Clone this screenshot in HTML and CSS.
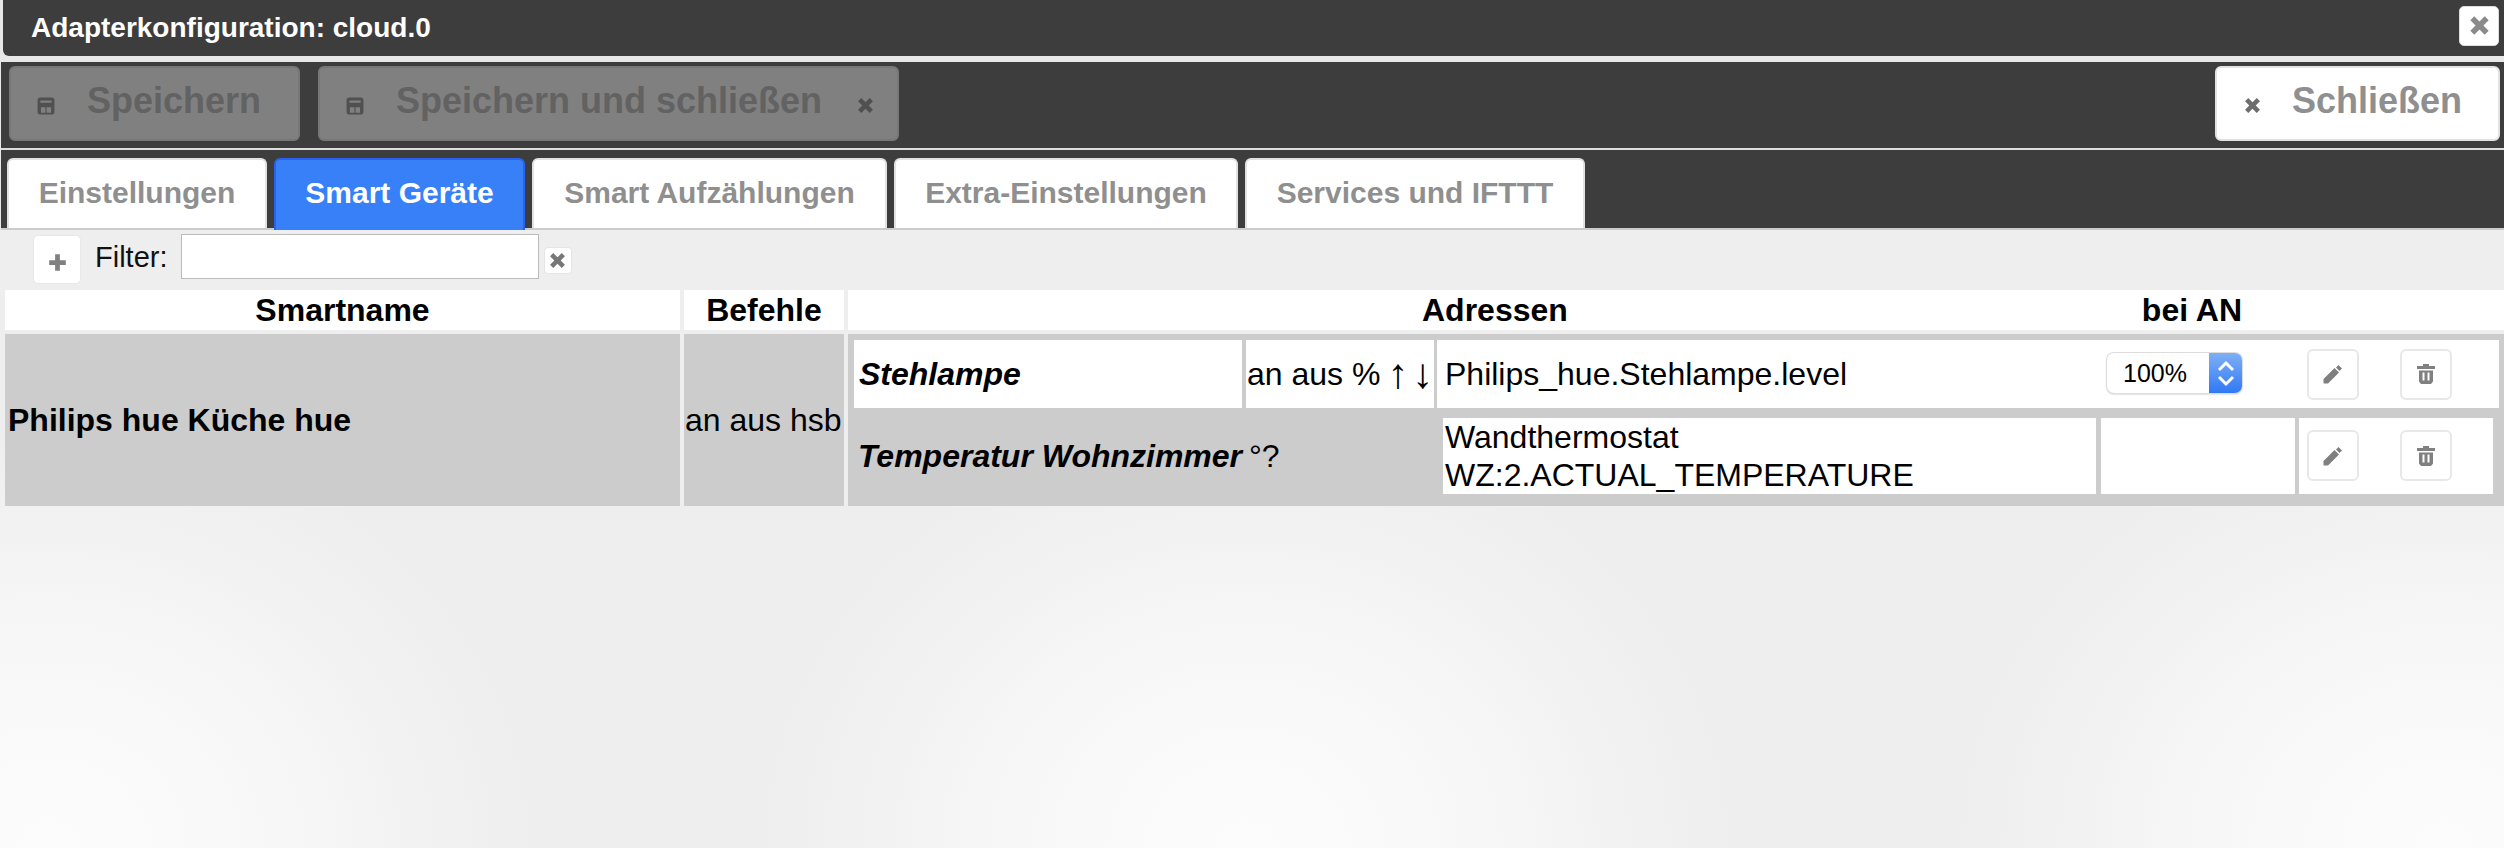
FILE: index.html
```html
<!DOCTYPE html>
<html>
<head>
    <title>Adapterkonfiguration: cloud.0</title>
    <link rel="stylesheet" href="styles.css">
</head>
<body>
    <svg class="icon-defs" width="0" height="0">
        <symbol id="i-close" viewBox="0 0 16 16"><path d="M1 4 4 1 8 5 12 1 15 4 11 8 15 12 12 15 8 11 4 15 1 12 5 8z"/></symbol>
        <symbol id="i-disk" viewBox="0 0 16 16"><path fill-rule="evenodd" d="M3 0.500h10a2.500 2.500 0 0 1 2.500 2.500v10a2.500 2.500 0 0 1-2.500 2.500H3A2.500 2.500 0 0 1 0.500 13V3A2.500 2.500 0 0 1 3 0.500zM3 3v2h10V3zM3.500 9v5h4V9zm5 0v5h4V9z"/></symbol>
        <symbol id="i-plus" viewBox="0 0 16 16"><path d="M6 1h4v5h5v4h-5v5H6v-5H1V6h5z"/></symbol>
        <symbol id="i-pencil" viewBox="0 0 20 20"><path d="M0.500 15 11.500 4 16 8.500 5 19.500H0.500zM15.500 1 19 4.500 16.500 7 13 3.500z"/></symbol>
        <symbol id="i-trash" viewBox="0 0 20 20"><path fill-rule="evenodd" d="M7 0h6v2h6v3H1V2h6zM3 6.500h14v11l-2 2.500H5l-2-2.500zM6.500 8.500v8h2v-8zM11.500 8.500v8h2v-8z"/></symbol>
    </svg>

    <div class="title-bar">
        <span class="title-text">Adapterkonfiguration: cloud.0</span>
        <button class="title-close"><svg class="icon"><use href="#i-close"/></svg></button>
    </div>

    <div class="action-bar">
        <button class="action-btn disabled btn-save"><svg class="icon"><use href="#i-disk"/></svg><span>Speichern</span></button>
        <button class="action-btn disabled btn-save-close"><svg class="icon"><use href="#i-disk"/></svg><span>Speichern und schließen</span><svg class="icon icon-end"><use href="#i-close"/></svg></button>
        <button class="action-btn btn-close"><svg class="icon"><use href="#i-close"/></svg><span>Schließen</span></button>
    </div>

    <div class="tab-bar">
        <div class="tab tab-1">Einstellungen</div>
        <div class="tab tab-2 active">Smart Geräte</div>
        <div class="tab tab-3">Smart Aufzählungen</div>
        <div class="tab tab-4">Extra-Einstellungen</div>
        <div class="tab tab-5">Services und IFTTT</div>
    </div>

    <div class="content">
        <div class="filter-row">
            <button class="add-btn"><svg class="icon"><use href="#i-plus"/></svg></button>
            <label class="filter-label">Filter:</label>
            <input class="filter-input" type="text">
            <button class="clear-btn"><svg class="icon"><use href="#i-close"/></svg></button>
        </div>

        <div class="head-row">
            <div class="head-cell col-name">Smartname</div>
            <div class="head-cell col-cmd">Befehle</div>
            <div class="head-cell col-addr">
                <span class="head-addr">Adressen</span>
                <span class="head-on">bei AN</span>
            </div>
        </div>

        <div class="device-row">
            <div class="device-cell col-name device-name">Philips hue Küche hue</div>
            <div class="device-cell col-cmd device-cmd">an aus hsb</div>
            <div class="col-addr device-addr">
                <div class="addr-row addr-first">
                    <div class="addr-name">Stehlampe</div>
                    <div class="addr-cmd">an aus % <span class="arrows">↑ ↓</span></div>
                    <div class="addr-main">
                        <span class="addr-path">Philips_hue.Stehlampe.level</span>
                        <div class="select-box">
                            <span class="select-value">100%</span>
                            <span class="select-arrows">
                                <svg viewBox="0 0 33 40" width="33" height="40"><path d="M10 17l7-7 7 7M10 24l7 7 7-7" fill="none" stroke="#fff" stroke-width="3"/></svg>
                            </span>
                        </div>
                        <button class="row-btn"><svg class="icon"><use href="#i-pencil"/></svg></button>
                        <button class="row-btn"><svg class="icon"><use href="#i-trash"/></svg></button>
                    </div>
                </div>
                <div class="addr-row addr-second">
                    <div class="addr-name2">Temperatur Wohnzimmer</div>
                    <div class="addr-cmd2">°?</div>
                    <div class="addr-path2">Wandthermostat<br>WZ:2.ACTUAL_TEMPERATURE</div>
                    <div class="addr-empty"></div>
                    <div class="addr-btns">
                        <button class="row-btn"><svg class="icon"><use href="#i-pencil"/></svg></button>
                        <button class="row-btn"><svg class="icon"><use href="#i-trash"/></svg></button>
                    </div>
                </div>
            </div>
        </div>
    </div>
</body>
</html>
```

FILE: styles.css
```css
* { box-sizing: border-box; }
html, body { margin: 0; padding: 0; height: 100%; overflow: hidden; }
body {
    font-family: "Liberation Sans", Arial, sans-serif;
    background: #e8e8e8;
    width: 2504px;
    height: 848px;
}
button { font-family: inherit; padding: 0; cursor: pointer; }
.icon-defs { position: absolute; }
.icon { width: 18px; height: 18px; fill: #8a8a8a; display: block; flex: none; filter: blur(0.5px); }

.title-bar {
    height: 56px;
    margin-left: 3px;
    background: #3d3d3d;
    border-bottom-left-radius: 6px;
    display: flex;
    align-items: center;
    justify-content: space-between;
    padding: 0 5px 0 28px;
}
.title-text { color: #fff; font-size: 28px; font-weight: bold; }
.title-close {
    width: 40px;
    height: 40px;
    background: #fff;
    border: 1px solid #ddd;
    border-radius: 5px;
    display: flex;
    align-items: center;
    justify-content: center;
    margin-bottom: 5px;
}
.title-close .icon { width: 21px; height: 21px; }

.action-bar {
    margin: 6px 0 0 1px;
    height: 88px;
    background: #3d3d3d;
    border-bottom: 2px solid #ddd;
    display: flex;
    align-items: flex-start;
    padding: 4px 4px 0 8px;
}
.action-btn {
    height: 75px;
    display: flex;
    align-items: center;
    padding-bottom: 6px;
    font-size: 36px;
    font-weight: bold;
    color: #8f8f8f;
    background: #fff;
    border: 2px solid #e2e2e2;
    border-radius: 6px;
}
.action-btn .icon { margin: 10px 32px 0 26px; }
.action-btn.disabled { background: #808080; border-color: #777; color: #626262; }
.action-btn.disabled .icon { fill: #505050; }
.btn-save { width: 291px; }
.btn-save-close { width: 581px; margin-left: 18px; }
.btn-save-close .icon-end { width: 17px; height: 17px; margin: 10px 0 0 35px; }
.btn-close { width: 285px; margin-left: auto; }
.btn-close .icon { width: 17px; height: 17px; fill: #6e6e6e; margin-left: 27px; margin-right: 31px; }

.tab-bar {
    margin-left: 1px;
    height: 80px;
    background: #3d3d3d;
    border-bottom: 2px solid #ccc;
    display: flex;
    align-items: flex-end;
    padding-left: 6px;
    gap: 7px;
}
.tab {
    height: 70px;
    background: #fff;
    border: 2px solid #e2e2e2;
    border-bottom: none;
    border-radius: 6px 6px 0 0;
    color: #8f8f8f;
    font-size: 30px;
    font-weight: bold;
    display: flex;
    align-items: center;
    justify-content: center;
    padding-bottom: 2px;
}
.tab.active { background: #3780f7; border-color: #2a62f0; color: #fff; height: 72px; margin-bottom: -2px; padding-bottom: 4px; position: relative; }
.tab-1 { width: 260px; }
.tab-2 { width: 251px; }
.tab-3 { width: 355px; }
.tab-4 { width: 344px; }
.tab-5 { width: 340px; }

.content {
    height: 618px;
    background-color: #eee;
    background-image: radial-gradient(ellipse 490px 430px at 50% 100%, #fcfcfc 0%, #f9f9f9 35%, #f6f6f6 55%, #f2f2f2 75%, #eee 100%);
    background-size: 1198px 100%;
    background-position: -551px 0;
}
.filter-row { height: 60px; display: flex; align-items: flex-start; padding-left: 33px; }
.add-btn {
    width: 48px;
    height: 49px;
    margin-top: 5px;
    background: #fff;
    border: 1px solid #e8e8e8;
    border-radius: 5px;
    display: flex;
    align-items: center;
    justify-content: center;
}
.add-btn .icon { width: 19px; height: 19px; margin-top: 5px; fill: #808080; }
.filter-label { font-size: 29px; margin-left: 14px; line-height: 44px; margin-top: 5px; color: #111; }
.filter-input {
    width: 358px;
    height: 45px;
    margin: 4px 0 0 13px;
    padding: 0;
    background: #fff;
    border: 1px solid #bbb;
}
.clear-btn {
    width: 28px;
    height: 27px;
    margin: 17px 0 0 5px;
    background: #fff;
    border: 1px solid #e4e4e4;
    border-radius: 4px;
    display: flex;
    align-items: center;
    justify-content: center;
}
.clear-btn .icon { width: 17px; height: 17px; fill: #777; }

.head-row, .device-row { display: flex; padding-left: 5px; gap: 4px; font-size: 32px; }
.head-cell {
    height: 40px;
    line-height: 40px;
    background: #fff;
    font-weight: bold;
    text-align: center;
    color: #000;
}
.col-name { width: 675px; }
.col-cmd { width: 160px; }
.col-addr { flex: 1; }
.head-cell.col-addr { display: flex; }
.head-addr { margin-left: 574px; }
.head-on { margin-left: 574px; }

.device-row { margin-top: 4px; height: 172px; }
.device-cell { background: #ccc; display: flex; align-items: center; color: #000; }
.device-name { font-weight: bold; padding-left: 3px; }
.device-cmd { padding-left: 1px; }
.device-addr { background: #ccc; padding: 6px 5px 0 6px; color: #000; }

.addr-row { display: flex; }
.addr-first { height: 68px; gap: 4px; }
.addr-name, .addr-cmd, .addr-main { background: #fff; display: flex; align-items: center; }
.addr-name { width: 388px; font-weight: bold; font-style: italic; padding-left: 5px; }
.addr-cmd { width: 188px; padding-left: 1px; white-space: pre; }
.arrows { font-size: 42px; line-height: 1; word-spacing: -8px; margin-left: -2px; }
.addr-main { flex: 1; padding-left: 8px; margin-left: -1px; }
.addr-path { width: 662px; }

.select-box {
    width: 135px;
    height: 40px;
    margin-top: -2px;
    background: #fff;
    border-radius: 7px;
    box-shadow: 0 0 0 1px #ddd, 0 1px 2px #aaa;
    display: flex;
    overflow: hidden;
    font-size: 25px;
}
.select-value { flex: 1; line-height: 40px; padding-left: 16px; }
.select-arrows { width: 33px; height: 40px; background: linear-gradient(#7fb0f5, #2f79f5); }
.row-btn {
    width: 52px;
    height: 51px;
    background: #fff;
    border: 2px solid #e8e8e8;
    border-radius: 6px;
    display: flex;
    align-items: center;
    justify-content: center;
}
.row-btn .icon { width: 20px; height: 20px; fill: #808080; }
.addr-main .row-btn { margin-left: 41px; }
.addr-main .select-box + .row-btn { margin-left: 65px; }

.addr-second { height: 76px; margin-top: 10px; }
.addr-name2 { width: 386px; margin-left: 4px; font-weight: bold; font-style: italic; white-space: nowrap; align-self: center; }
.addr-cmd2 { width: 199px; padding-left: 5px; align-self: center; }
.addr-path2 { width: 653px; background: #fff; padding-left: 2px; line-height: 38px; white-space: nowrap; }
.addr-empty { width: 194px; margin-left: 5px; background: #fff; }
.addr-btns { width: 194px; margin-left: 4px; background: #fff; display: flex; padding: 12px 0 0 8px; gap: 41px; }
```
